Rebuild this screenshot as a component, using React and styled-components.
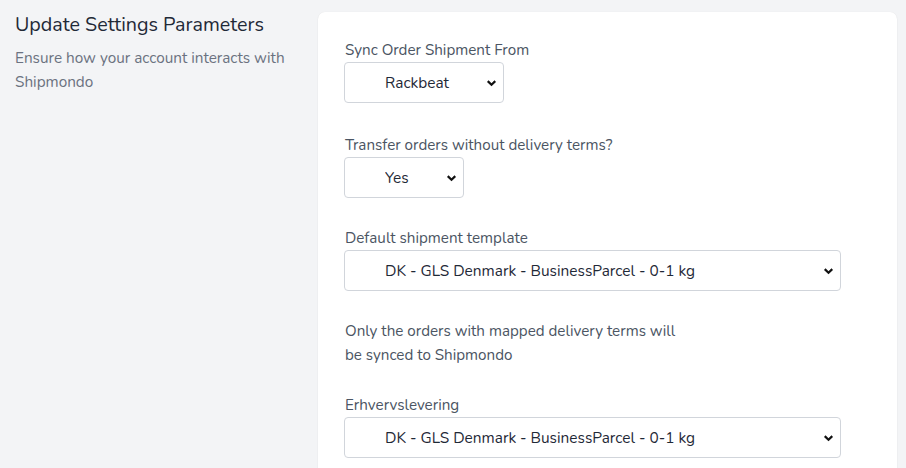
import React from 'react';
import styled, { createGlobalStyle } from 'styled-components';

const GlobalStyle = createGlobalStyle`
  html, body {
    margin: 0;
    padding: 0;
    background: #f3f4f6;
    font-family: "Nunito", "Lato", "Noto Sans", sans-serif;
  }
`;

const Page = styled.div`
  display: grid;
  grid-template-columns: 290px 579px;
  column-gap: 13px;
  padding: 12px 0 0 15px;
  height: 456px;
  overflow: hidden;
`;

const Intro = styled.div`
  padding-top: 0;
`;

const Heading = styled.h2`
  margin: -1px 0 0;
  font-size: 19.7px;
  line-height: 28px;
  font-weight: 400;
  color: #1f2937;
`;

const Lead = styled.p`
  margin: 7px 0 0;
  font-size: 15.3px;
  line-height: 24px;
  color: #6b7280;
`;

const Card = styled.div`
  background: #fff;
  border-radius: 7px;
  box-shadow: 0 1px 2px rgba(0, 0, 0, 0.06), 0 0 1px rgba(0, 0, 0, 0.08);
  padding: 26px 26px 0 26px;
  min-height: 470px;
`;

const Field = styled.div`
  display: flex;
  flex-direction: column;
  align-items: flex-start;
  margin-bottom: ${p => p.$gap || 29}px;
`;

const Label = styled.label`
  font-size: 15.2px;
  line-height: 24px;
  color: #4b5563;
  margin-left: 1px;
`;

const SelectWrap = styled.div`
  position: relative;
  width: ${p => p.$width}px;
`;

const Select = styled.select`
  appearance: none;
  -webkit-appearance: none;
  width: 100%;
  height: 41px;
  padding: 0 28px 0 40px;
  border: 1px solid #d1d5db;
  border-radius: 4px;
  background: #fff;
  font-family: inherit;
  font-size: 15.4px;
  color: #1f2937;
  outline: none;
`;

const Chevron = styled.svg`
  position: absolute;
  right: 7px;
  top: 50%;
  width: 11px;
  height: 11px;
  transform: translateY(-50%);
  pointer-events: none;
`;

const Note = styled.p`
  margin: 0 0 26px 1px;
  max-width: 345px;
  font-size: 15.2px;
  line-height: 24px;
  color: #4b5563;
`;

function Dropdown({ width, value, options }) {
  return (
    <SelectWrap $width={width}>
      <Select defaultValue={value}>
        {options.map(o => (
          <option key={o}>{o}</option>
        ))}
      </Select>
      <Chevron viewBox="0 0 10 10">
        <path d="M1.6 3.3 L5 6.6 L8.4 3.3" fill="none" stroke="#111" strokeWidth="2" />
      </Chevron>
    </SelectWrap>
  );
}

const template = 'DK - GLS Denmark - BusinessParcel - 0-1 kg';

export default function App() {
  return (
    <>
      <GlobalStyle />
      <Page>
        <Intro>
          <Heading>Update Settings Parameters</Heading>
          <Lead>
            Ensure how your account interacts with
            <br />
            Shipmondo
          </Lead>
        </Intro>
        <Card>
          <Field $gap={30}>
            <Label>Sync Order Shipment From</Label>
            <Dropdown width={160} value="Rackbeat" options={['Rackbeat', 'Shipmondo']} />
          </Field>
          <Field $gap={28}>
            <Label>Transfer orders without delivery terms?</Label>
            <Dropdown width={120} value="Yes" options={['Yes', 'No']} />
          </Field>
          <Field $gap={28}>
            <Label>Default shipment template</Label>
            <Dropdown width={497} value={template} options={[template]} />
          </Field>
          <Note>
            Only the orders with mapped delivery terms will be synced to Shipmondo
          </Note>
          <Field>
            <Label>Erhvervslevering</Label>
            <Dropdown width={497} value={template} options={[template]} />
          </Field>
        </Card>
      </Page>
    </>
  );
}
